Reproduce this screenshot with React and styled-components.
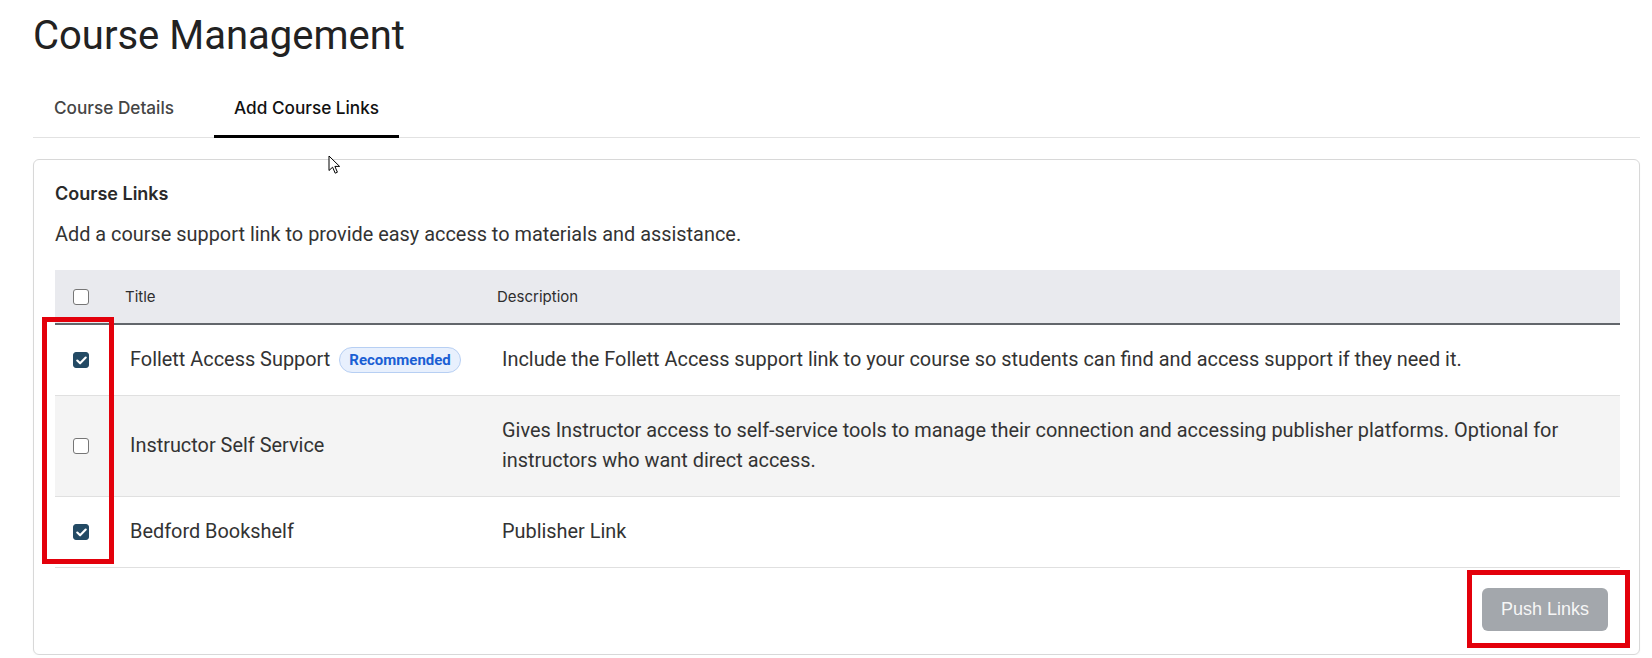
import React from "react";
import styled, { createGlobalStyle, css } from "styled-components";

const GlobalStyle = createGlobalStyle`
  body {
    margin: 0;
    background: #ffffff;
    font-family: Roboto, "Liberation Sans", sans-serif;
    color: #333333;
  }
`;

const Page = styled.div`
  position: relative;
  padding: 0 12px 0 33px;
`;

const PageTitle = styled.h1`
  margin: 0;
  padding-top: 12px;
  font-family: Roboto, sans-serif;
  font-weight: 400;
  font-size: 40px;
  line-height: 48px;
  color: #222222;
`;

const TabBar = styled.div`
  display: flex;
  gap: 20px;
  margin-top: 18px;
  padding-left: 1px;
  border-bottom: 1px solid #e2e2e2;
`;

const Tab = styled.div`
  box-sizing: border-box;
  height: 60px;
  margin-bottom: -1px;
  padding: 2px 20px 0;
  display: flex;
  align-items: center;
  font-family: Inter, sans-serif;
  font-size: 17.2px;
  font-weight: 500;
  color: #454545;
  border-bottom: 3px solid transparent;

  ${(p) =>
    p.$active &&
    css`
      color: #111111;
      border-bottom-color: #000000;
    `}
`;

const Card = styled.section`
  margin-top: 21px;
  border: 1px solid #d8d8d8;
  border-radius: 6px;
  padding: 22px 19px 23px 21px;
  box-shadow: 0 1px 2px rgba(0, 0, 0, 0.04);
`;

const CardTitle = styled.h2`
  margin: 0;
  font-family: Inter, sans-serif;
  font-size: 18px;
  font-weight: 600;
  line-height: 24px;
  color: #2a2a2a;
`;

const CardText = styled.p`
  margin: 14px 0 0;
  font-size: 19.9px;
  line-height: 30px;
  color: #333333;
`;

const Table = styled.div`
  margin-top: 20px;
`;

const HeadRow = styled.div`
  display: grid;
  grid-template-columns: 52px 372px 1fr;
  align-items: center;
  height: 53px;
  background: #e9eaee;
  border-bottom: 2px solid #62666b;
`;

const HeadCell = styled.div`
  padding-left: 18px;
  font-family: Inter, sans-serif;
  font-size: 15px;
  font-weight: 400;
  color: #2e2e2e;
`;

const Row = styled.div`
  display: grid;
  grid-template-columns: 52px 372px 1fr;
  align-items: center;
  padding: 20px 0;
  border-bottom: 1px solid #e0e0e0;
  background: ${(p) => (p.$striped ? "#f4f4f4" : "#ffffff")};
`;

const CheckCell = styled.div`
  display: flex;
  justify-content: center;
`;

const TitleCell = styled.div`
  display: flex;
  align-items: center;
  padding-left: 23px;
  font-size: 19.9px;
  line-height: 30px;
  color: #333333;
`;

const DescCell = styled.div`
  padding: 0 20px 0 23px;
  font-size: 19.9px;
  line-height: 30px;
  color: #333333;
`;

const Badge = styled.span`
  box-sizing: border-box;
  display: inline-flex;
  align-items: center;
  height: 26px;
  margin-left: 9px;
  padding: 0 9px;
  border-radius: 13px;
  background: #e8f0fd;
  border: 1px solid #b7cff3;
  color: #1b5fd4;
  font-size: 15px;
  font-weight: 700;
  line-height: 1;
`;

const Box = styled.span`
  box-sizing: border-box;
  display: inline-flex;
  align-items: center;
  justify-content: center;
  width: 16px;
  height: 16px;
  border-radius: 3px;
  border: 1px solid #767676;
  background: #ffffff;

  ${(p) =>
    p.$checked &&
    css`
      border-color: #234a64;
      background: #234a64;
    `}
`;

const Footer = styled.div`
  display: flex;
  justify-content: flex-end;
  padding: 20px 12px 0 0;
`;

const PushButton = styled.button`
  height: 43px;
  padding: 0 19px;
  border: none;
  border-radius: 6px;
  background: #a3a7ac;
  color: #f6f6f6;
  font-family: "Liberation Sans", Arial, sans-serif;
  font-size: 18px;
`;

const Highlight = styled.div`
  position: absolute;
  box-sizing: border-box;
  border: 5px solid #e3000b;
  left: ${(p) => p.$x}px;
  top: ${(p) => p.$y}px;
  width: ${(p) => p.$w}px;
  height: ${(p) => p.$h}px;
  pointer-events: none;
`;

const Cursor = styled.svg`
  position: absolute;
  left: 328px;
  top: 155px;
`;

function Checkbox({ checked }) {
  return (
    <Box $checked={checked}>
      {checked && (
        <svg width="11" height="9" viewBox="0 0 11 9">
          <path
            d="M1.3 4.6 L4.1 7.3 L9.7 1.5"
            fill="none"
            stroke="#ffffff"
            strokeWidth="2.1"
            strokeLinecap="round"
            strokeLinejoin="round"
          />
        </svg>
      )}
    </Box>
  );
}

const links = [
  {
    title: "Follett Access Support",
    recommended: true,
    checked: true,
    description:
      "Include the Follett Access support link to your course so students can find and access support if they need it.",
  },
  {
    title: "Instructor Self Service",
    checked: false,
    description:
      "Gives Instructor access to self-service tools to manage their connection and accessing publisher platforms. Optional for instructors who want direct access.",
  },
  {
    title: "Bedford Bookshelf",
    checked: true,
    description: "Publisher Link",
  },
];

export default function App() {
  return (
    <>
      <GlobalStyle />
      <Page>
        <PageTitle>Course Management</PageTitle>
        <TabBar>
          <Tab>Course Details</Tab>
          <Tab $active>Add Course Links</Tab>
        </TabBar>

        <Card>
          <CardTitle>Course Links</CardTitle>
          <CardText>
            Add a course support link to provide easy access to materials and
            assistance.
          </CardText>

          <Table>
            <HeadRow>
              <CheckCell>
                <Checkbox checked={false} />
              </CheckCell>
              <HeadCell>Title</HeadCell>
              <HeadCell>Description</HeadCell>
            </HeadRow>
            {links.map((link, i) => (
              <Row key={link.title} $striped={i % 2 === 1}>
                <CheckCell>
                  <Checkbox checked={link.checked} />
                </CheckCell>
                <TitleCell>
                  {link.title}
                  {link.recommended && <Badge>Recommended</Badge>}
                </TitleCell>
                <DescCell>{link.description}</DescCell>
              </Row>
            ))}
          </Table>

          <Footer>
            <PushButton disabled>Push Links</PushButton>
          </Footer>
        </Card>

        <Highlight $x={42} $y={317} $w={72} $h={247} />
        <Highlight $x={1467} $y={570} $w={163} $h={78} />

        <Cursor width="13" height="20" viewBox="0 0 13 20">
          <path
            d="M1 1 L1 15.5 L4.6 12.2 L7.2 18.2 L9.4 17.2 L6.9 11.4 L11.6 11.4 Z"
            fill="#ffffff"
            stroke="#000000"
            strokeWidth="1"
            strokeLinejoin="round"
          />
        </Cursor>
      </Page>
    </>
  );
}
